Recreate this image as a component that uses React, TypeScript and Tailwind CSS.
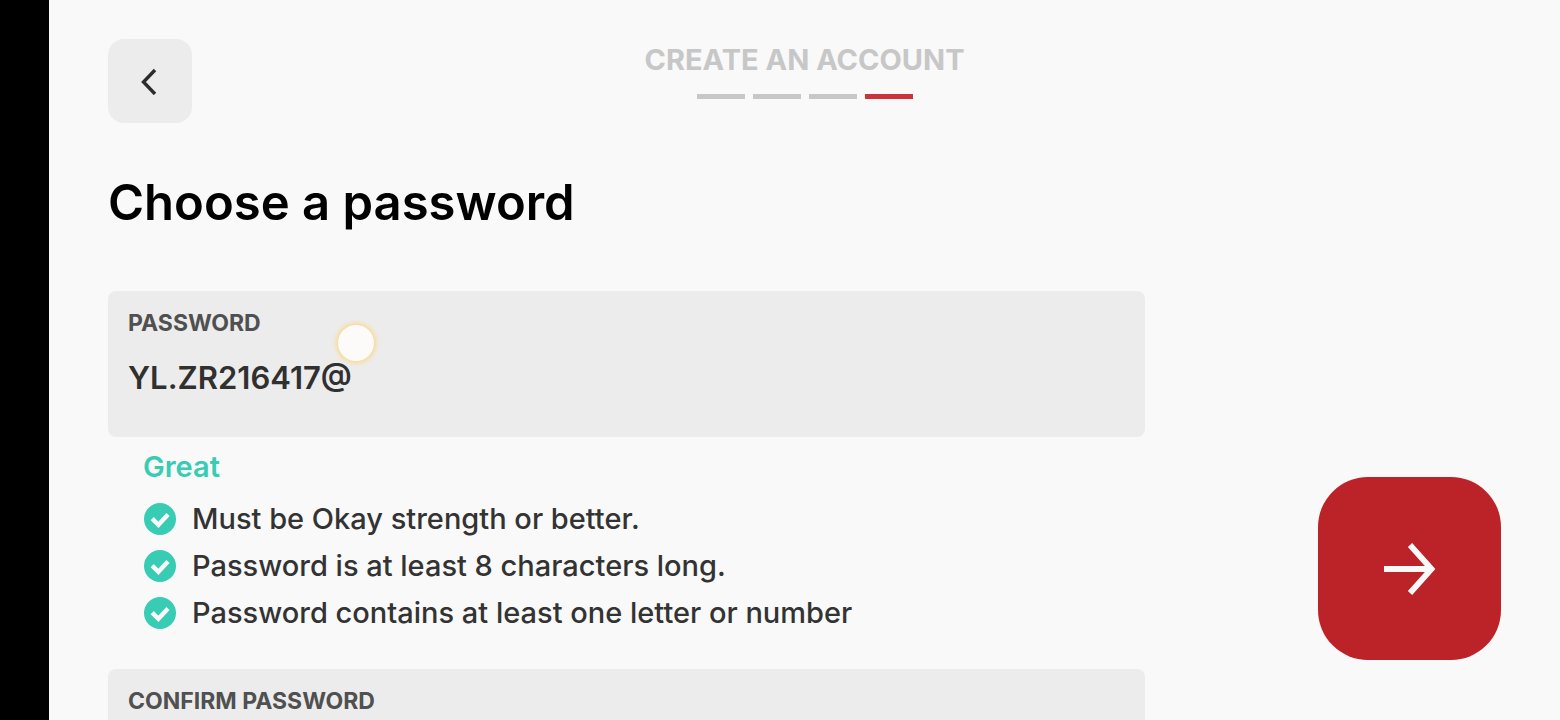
import { useState } from "react";

const STEPS = [1, 2, 3, 4];
const CURRENT_STEP = 4;

const RULES = [
  "Must be Okay strength or better.",
  "Password is at least 8 characters long.",
  "Password contains at least one letter or number",
];

function CheckIcon() {
  return (
    <svg viewBox="0 0 32 32" className="size-8 shrink-0" aria-hidden="true">
      <circle cx="16" cy="16" r="16" fill="#38ccb4" />
      <path d="M8.2 15.6 L14.4 21.8 L24 11.6" fill="none" stroke="#fafafa" strokeWidth="4.4" />
    </svg>
  );
}

function Field({
  id,
  label,
  value,
  onChange,
  touched = false,
}: {
  id: string;
  label: string;
  value: string;
  onChange: (value: string) => void;
  touched?: boolean;
}) {
  return (
    <div className="relative flex shrink-0 flex-col rounded-lg bg-[#ececec] px-5 pt-4 pb-9">
      <label htmlFor={id} className="text-[23px] leading-8 font-bold text-[#505050]">
        {label}
      </label>
      <input
        id={id}
        type="text"
        value={value}
        onChange={(e) => onChange(e.target.value)}
        className="mt-4 h-[46px] w-full bg-transparent text-[31px] font-semibold text-[#303030] outline-none"
      />
      {touched && (
        <span className="absolute top-[34px] left-[230px] size-9 rounded-full bg-[#fcfbfa] shadow-[0_0_4px_2px_#fbd98f]" />
      )}
    </div>
  );
}

export default function App() {
  const [password, setPassword] = useState("YL.ZR216417@");
  const [confirm, setConfirm] = useState("");

  return (
    <div className="flex h-screen overflow-hidden bg-black pl-[49px] font-['Inter','Liberation_Sans',sans-serif]">
      <main className="flex min-w-0 flex-1 flex-col bg-[#f9f9f9] px-[59px] pt-[39px]">
        <header className="grid shrink-0 grid-cols-[1fr_auto_1fr] items-start">
          <button
            type="button"
            aria-label="Back"
            className="flex size-[84px] items-center justify-center rounded-2xl bg-[#ececec]"
          >
            <svg viewBox="0 0 20 28" className="h-7 w-5" aria-hidden="true">
              <path
                d="M15 3 L3.5 15 L15 27"
                fill="none"
                stroke="#2c2c2c"
                strokeWidth="3.4"
              />
            </svg>
          </button>
          <div className="flex flex-col items-center pt-[3px]">
            <p className="text-[29px] leading-9 font-bold text-[#c7c7c7]">CREATE AN ACCOUNT</p>
            <div className="mt-4 flex gap-2">
              {STEPS.map((step) => (
                <span
                  key={step}
                  className={
                    step === CURRENT_STEP ? "h-[5px] w-12 bg-[#cb3439]" : "h-[5px] w-12 bg-[#c7c7c7]"
                  }
                />
              ))}
            </div>
          </div>
        </header>

        <h1 className="mt-[50px] shrink-0 text-[49px] leading-[60px] font-semibold text-black">
          Choose a password
        </h1>

        <div className="mt-[58px] flex min-h-0 flex-1 gap-[173px]">
          <form className="flex min-w-0 flex-1 flex-col">
            <Field id="password" label="PASSWORD" value={password} onChange={setPassword} touched />
            <p className="mt-2 pl-[35px] text-[29px] leading-[44px] font-semibold text-[#38ccb4]">
              Great
            </p>
            <ul className="mt-[6px] mb-[33px] pl-9">
              {RULES.map((rule) => (
                <li
                  key={rule}
                  className="flex h-[47px] items-center gap-4 text-[29px] font-medium text-[#333333]"
                >
                  <CheckIcon />
                  {rule}
                </li>
              ))}
            </ul>
            <Field
              id="confirm-password"
              label="CONFIRM PASSWORD"
              value={confirm}
              onChange={setConfirm}
            />
          </form>

          <button
            type="button"
            aria-label="Next"
            className="mb-[60px] flex size-[183px] shrink-0 items-center justify-center self-end rounded-[50px] bg-[#bc2329]"
          >
            <svg viewBox="0 0 52 52" className="size-[52px]" aria-hidden="true">
              <path
                d="M0 26 H47 M26 2 L47.5 26 L26 50"
                fill="none"
                stroke="#f9f9f9"
                strokeWidth="5.8"
              />
            </svg>
          </button>
        </div>
      </main>
    </div>
  );
}
